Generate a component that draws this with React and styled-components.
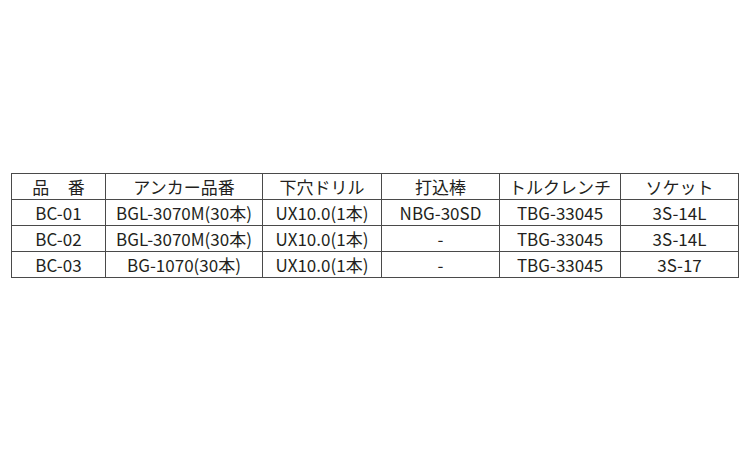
import React from "react";
import styled, { createGlobalStyle } from "styled-components";

const Global = createGlobalStyle`
  html, body { margin: 0; padding: 0; background: #ffffff; }
  body { font-family: "Noto Sans CJK JP", "Noto Sans", sans-serif; }
`;

const Page = styled.div`
  width: 750px;
  height: 450px;
  padding: 173px 0 0 11px;
  box-sizing: border-box;
`;

const Table = styled.table`
  border-collapse: collapse;
  table-layout: fixed;
  width: 727px;
  color: #231f20;
  font-size: 17px;
`;

const Cell = styled.td`
  border: 1.5px solid #4a4a4a;
  height: 25px;
  padding: 0;
  text-align: center;
  vertical-align: middle;
  line-height: 25px;
  white-space: nowrap;
`;

const Spaced = styled.span`
  letter-spacing: 1.1em;
  margin-right: -1.1em;
`;

const widths = [94, 157, 119, 118, 121, 118];
const head = ["品番", "アンカー品番", "下穴ドリル", "打込棒", "トルクレンチ", "ソケット"];
const rows = [
  ["BC-01", "BGL-3070M(30本)", "UX10.0(1本)", "NBG-30SD", "TBG-33045", "3S-14L"],
  ["BC-02", "BGL-3070M(30本)", "UX10.0(1本)", "-", "TBG-33045", "3S-14L"],
  ["BC-03", "BG-1070(30本)", "UX10.0(1本)", "-", "TBG-33045", "3S-17"],
];

export default function App() {
  return (
    <Page>
      <Global />
      <Table>
        <colgroup>
          {widths.map((w, i) => (
            <col key={i} style={{ width: w }} />
          ))}
        </colgroup>
        <tbody>
          <tr>
            {head.map((h, i) => (
              <Cell key={i}>{i === 0 ? <Spaced>{h}</Spaced> : h}</Cell>
            ))}
          </tr>
          {rows.map((r, ri) => (
            <tr key={ri}>
              {r.map((c, ci) => (
                <Cell key={ci}>{c}</Cell>
              ))}
            </tr>
          ))}
        </tbody>
      </Table>
    </Page>
  );
}
